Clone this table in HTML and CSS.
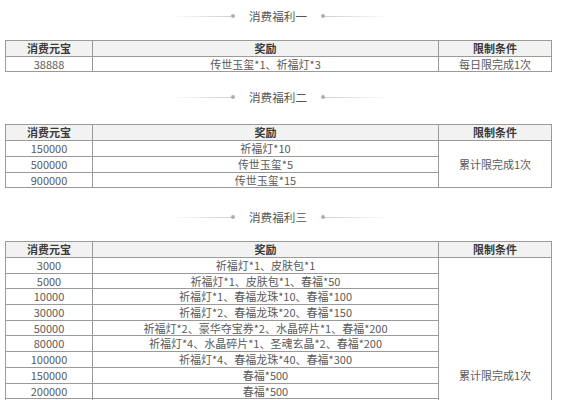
FILE: index.html
```html
<!DOCTYPE html>
<html lang="zh">
<head>
<meta charset="utf-8">
<link rel="stylesheet" href="styles.css">
</head>
<body>
<div class="page">
  <section class="sec sec1">
    <div class="title"><span class="line left"></span><span class="dot"></span><span class="ttext">消费福利一</span><span class="dot"></span><span class="line right"></span></div>
    <table class="tbl">
      <colgroup><col class="c1"><col class="c2"><col class="c3"></colgroup>
      <tr><th>消费元宝</th><th>奖励</th><th>限制条件</th></tr>
      <tr><td>38888</td><td>传世玉玺*1、祈福灯*3</td><td>每日限完成1次</td></tr>
    </table>
  </section>
  <section class="sec sec2">
    <div class="title"><span class="line left"></span><span class="dot"></span><span class="ttext">消费福利二</span><span class="dot"></span><span class="line right"></span></div>
    <table class="tbl">
      <colgroup><col class="c1"><col class="c2"><col class="c3"></colgroup>
      <tr><th>消费元宝</th><th>奖励</th><th>限制条件</th></tr>
      <tr><td>150000</td><td>祈福灯*10</td><td rowspan="3">累计限完成1次</td></tr>
      <tr><td>500000</td><td>传世玉玺*5</td></tr>
      <tr><td>900000</td><td>传世玉玺*15</td></tr>
    </table>
  </section>
  <section class="sec sec3">
    <div class="title"><span class="line left"></span><span class="dot"></span><span class="ttext">消费福利三</span><span class="dot"></span><span class="line right"></span></div>
    <table class="tbl">
      <colgroup><col class="c1"><col class="c2"><col class="c3"></colgroup>
      <tr><th>消费元宝</th><th>奖励</th><th>限制条件</th></tr>
      <tr><td>3000</td><td>祈福灯*1、皮肤包*1</td><td rowspan="15">累计限完成1次</td></tr>
      <tr><td>5000</td><td>祈福灯*1、皮肤包*1、春福*50</td></tr>
      <tr><td>10000</td><td>祈福灯*1、春福龙珠*10、春福*100</td></tr>
      <tr><td>30000</td><td>祈福灯*2、春福龙珠*20、春福*150</td></tr>
      <tr><td>50000</td><td>祈福灯*2、豪华夺宝券*2、水晶碎片*1、春福*200</td></tr>
      <tr><td>80000</td><td>祈福灯*4、水晶碎片*1、圣魂玄晶*2、春福*200</td></tr>
      <tr><td>100000</td><td>祈福灯*4、春福龙珠*40、春福*300</td></tr>
      <tr><td>150000</td><td>春福*500</td></tr>
      <tr><td>200000</td><td>春福*500</td></tr>
      <tr><td>300000</td><td>春福*800</td></tr>
      <tr><td>400000</td><td>春福*800</td></tr>
      <tr><td>500000</td><td>春福*1000</td></tr>
      <tr><td>600000</td><td>春福*1000</td></tr>
      <tr><td>800000</td><td>春福*1500</td></tr>
      <tr><td>1000000</td><td>春福*2000</td></tr>
    </table>
  </section>
</div>
</body>
</html>
```

FILE: styles.css
```css
html, body {
  margin: 0;
  padding: 0;
  background: #ffffff;
}
.page {
  padding: 0 5px;
  font-family: "Noto Sans CJK SC", "Noto Sans", sans-serif;
  font-size: 11px;
  color: #5a5a5a;
}
.sec1 .title { height: 32px; margin-bottom: 8px; }
.sec2 .title { height: 32px; margin-top: 9px; margin-bottom: 11px; }
.sec3 .title { height: 32px; margin-top: 13px; margin-bottom: 8px; }
.title {
  display: flex;
  align-items: center;
  justify-content: center;
}
.line {
  width: 60px;
  height: 1px;
}
.line.left { background: linear-gradient(to right, rgba(210,210,210,0), #cfcfcf); }
.line.right { background: linear-gradient(to left, rgba(210,210,210,0), #cfcfcf); width: 66px; }
.dot {
  width: 4px;
  height: 4px;
  border-radius: 50%;
  background: #b0b0b0;
}
.ttext {
  margin: 0 14px;
  font-size: 11.6px;
  color: #555555;
  line-height: 14px;
}
.tbl {
  border-collapse: collapse;
  table-layout: fixed;
  width: 546px;
}
.c1 { width: 87px; }
.c2 { width: 346px; }
.c3 { width: 113px; }
.tbl th, .tbl td {
  border: 1px solid #9a9a9a;
  padding: 0;
  text-align: center;
  line-height: 14.7px;
  height: 14.7px;
  white-space: nowrap;
  overflow: hidden;
}
.tbl th {
  background: #f2f2f2;
  color: #3a3a3a;
  font-weight: bold;
}
```
